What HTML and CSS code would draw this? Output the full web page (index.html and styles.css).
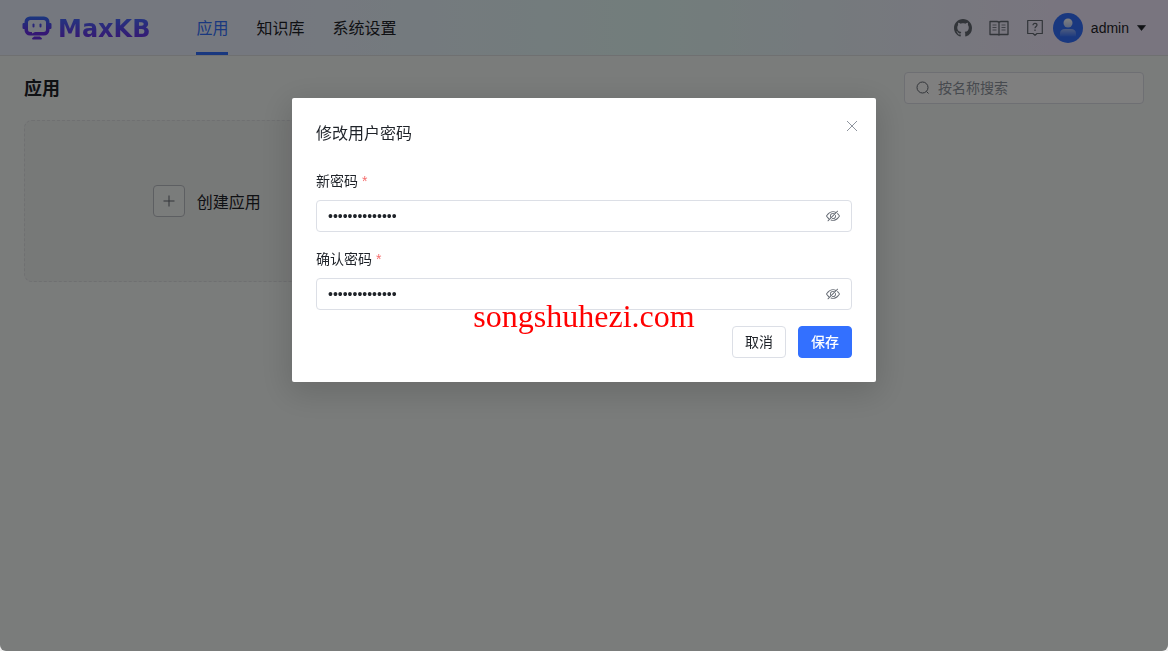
FILE: index.html
```html
<!DOCTYPE html>
<html lang="zh-CN">
<head>
<meta charset="utf-8">
<title>MaxKB</title>
<link rel="stylesheet" href="styles.css">
</head>
<body>
<div class="app">
  <header class="topbar">
    <a class="logo" href="#">
      <svg class="logo-mark" viewBox="0 0 30 24" aria-hidden="true">
        <defs>
          <linearGradient id="brand" gradientUnits="userSpaceOnUse" x1="0" y1="0" x2="0" y2="24">
            <stop offset="0" stop-color="#3370ff"/>
            <stop offset=".7" stop-color="#6a2ee8"/>
            <stop offset="1" stop-color="#6a2ee8"/>
          </linearGradient>
        </defs>
        <path fill="url(#brand)" fill-rule="evenodd" d="M8 .5h14a5.500 5.500 0 0 1 5.500 5.500V7H28.300a1.200 1.200 0 0 1 1.200 1.200v3.600a1.200 1.200 0 0 1-1.200 1.200H27.500v1a5.500 5.500 0 0 1-5.500 5.500H8A5.500 5.500 0 0 1 2.500 14V13H1.700A1.200 1.200 0 0 1 .5 11.800V8.200A1.200 1.200 0 0 1 1.700 7H2.500V6A5.500 5.500 0 0 1 8 .5ZM8.500 4A2.500 2.500 0 0 0 6 6.500v7A2.500 2.500 0 0 0 8.500 16H10v1.500L13 16h8.500A2.500 2.500 0 0 0 24 13.500v-7A2.500 2.500 0 0 0 21.500 4ZM12 20.500h6c0 .9 2 1.200 2 2.200 0 .5-.4.800-1 .8h-8c-.6 0-1-.3-1-.8 0-1 2-1.300 2-2.200Z"/>
        <rect x="10.500" y="7.500" width="2" height="4" rx="1" fill="url(#brand)"/>
        <rect x="17.500" y="7.500" width="2" height="4" rx="1" fill="url(#brand)"/>
      </svg>
      <span class="logo-text">MaxKB</span>
    </a>
    <nav class="nav">
      <a class="nav-item active" href="#">应用</a>
      <a class="nav-item" href="#">知识库</a>
      <a class="nav-item" href="#">系统设置</a>
    </nav>
    <div class="tools">
      <a class="tool" href="#" aria-label="GitHub">
        <svg class="icon-18" viewBox="0 0 16 16" fill="currentColor"><path d="M8 0C3.580 0 0 3.580 0 8c0 3.540 2.290 6.530 5.470 7.590.4.070.55-.17.55-.38 0-.19-.01-.82-.01-1.490-2.010.37-2.530-.49-2.690-.94-.09-.23-.48-.94-.82-1.130-.28-.15-.68-.52-.01-.53.63-.01 1.080.58 1.230.82.72 1.210 1.870.87 2.330.66.070-.52.280-.87.510-1.070-1.780-.2-3.640-.89-3.640-3.950 0-.87.310-1.590.820-2.150-.08-.2-.36-1.020.080-2.120 0 0 .67-.21 2.200.82.640-.18 1.320-.27 2-.27s1.360.090 2 .27c1.530-1.040 2.200-.82 2.200-.82.440 1.100.160 1.920.080 2.120.510.560.820 1.270.820 2.150 0 3.070-1.870 3.750-3.650 3.950.290.250.540.730.540 1.480 0 1.070-.01 1.930-.01 2.200 0 .210.150.460.550.380A8.010 8.010 0 0 0 16 8c0-4.420-3.580-8-8-8Z"/></svg>
      </a>
      <a class="tool" href="#" aria-label="文档">
        <svg class="icon-20" viewBox="0 0 20 20" fill="none" stroke="currentColor" stroke-width="1.300" stroke-linejoin="round"><path d="M10 4.500C9.500 3.800 9 3.500 8 3.500H1v13h7.500c.7 0 1.200.2 1.500.6.3-.4.800-.6 1.500-.6H19v-13h-7c-1 0-1.500.3-2 1Zm0 0V17"/><path d="M3.500 7h4M3.500 9.500h4M3.500 12h4M12.500 7h4M12.500 9.500h4M12.500 12h4" stroke-width=".8"/></svg>
      </a>
      <a class="tool" href="#" aria-label="帮助">
        <svg class="icon-18" viewBox="0 0 18 18" fill="none" stroke="currentColor" stroke-width="1.200"><path d="M1.700 1.500h14.600v13H11l-2 1.800-2-1.800H1.700Z" stroke-linejoin="round"/><path d="M7 6.300c0-1.200.8-2 2-2s2 .7 2 1.800c0 1.400-2 1.500-2 3.200M9 10.500v1.400"/></svg>
      </a>
    </div>
    <button class="user" type="button">
      <svg class="avatar" viewBox="0 0 30 30" aria-hidden="true">
        <defs>
          <linearGradient id="head" x1="0" y1="0" x2="0" y2="1">
            <stop offset="0" stop-color="#fff"/>
            <stop offset="1" stop-color="#fff" stop-opacity=".65"/>
          </linearGradient>
          <linearGradient id="person" x1="0" y1="0" x2="0" y2="1">
            <stop offset="0" stop-color="#fff" stop-opacity=".5"/>
            <stop offset="1" stop-color="#fff" stop-opacity=".05"/>
          </linearGradient>
        </defs>
        <circle cx="15" cy="15" r="15" fill="#3370ff"/>
        <path fill="url(#person)" d="M7 23.500v-3c0-3 2-4.500 5-4.500h6c3 0 5 1.500 5 4.500v3Z"/>
        <circle cx="15" cy="10" r="4.500" fill="url(#head)"/>
      </svg>
      <span>admin</span>
      <svg class="caret" viewBox="0 0 8 6" aria-hidden="true"><path d="M0 .5h8L4 5.500Z" fill="currentColor" stroke="currentColor" stroke-width=".6"/></svg>
    </button>
  </header>
  <main class="page">
    <div class="page-head">
      <h1 class="page-title">应用</h1>
      <label class="search">
        <svg class="icon-14" viewBox="0 0 14 14" fill="none" stroke="currentColor"><circle cx="6.500" cy="6.500" r="5.500"/><path d="m10.500 10.500 2 2"/></svg>
        <input class="search-input" type="text" placeholder="按名称搜索" aria-label="按名称搜索">
      </label>
    </div>
    <div class="cards">
      <button class="create-card" type="button">
        <span class="plus">
          <svg class="icon-14" viewBox="0 0 14 14" fill="none" stroke="currentColor"><path d="M7 1.500v11M1.500 7h11"/></svg>
        </span>
        <span class="create-text">创建应用</span>
      </button>
    </div>
  </main>
</div>

<div class="overlay">
  <form class="dialog" role="dialog" aria-labelledby="dialog-title">
    <h2 class="dialog-title" id="dialog-title">修改用户密码</h2>
    <button class="close" type="button" aria-label="关闭">
      <svg class="icon-12" viewBox="0 0 12 12" fill="none" stroke="currentColor"><path d="m1 1 10 10M11 1 1 11"/></svg>
    </button>
    <div class="field">
      <label class="field-label" for="pwd">新密码 <span class="required">*</span></label>
      <div class="input-box">
        <input class="password" id="pwd" type="password" value="password123456">
        <button class="eye" type="button" aria-label="显示密码">
          <svg class="icon-14" viewBox="0 0 1024 1024" fill="currentColor"><path id="eye-off" d="M876.8 156.8c0-9.6-3.2-16-9.6-22.4-6.4-6.4-12.8-9.6-22.4-9.6-9.6 0-16 3.2-22.4 9.6L736 220.8c-64-32-137.6-51.2-224-60.8-160 16-288 73.6-377.6 176C44.8 438.4 0 496 0 512s48 73.6 134.4 176c22.4 25.6 44.8 48 73.6 67.2l-86.4 89.6c-6.4 6.4-9.6 12.8-9.6 22.4 0 9.6 3.2 16 9.6 22.4 6.4 6.4 12.8 9.6 22.4 9.6 9.6 0 16-3.2 22.4-9.6l704-710.4c3.2-6.4 6.4-12.8 6.4-22.4Zm-646.4 528c-76.8-70.4-128-128-153.6-172.8 28.8-48 80-105.6 153.6-172.8C304 272 400 230.4 512 224c64 3.2 124.8 19.2 176 44.8l-54.4 54.4C598.4 300.8 560 288 512 288c-64 0-115.2 22.4-160 64s-64 96-64 160c0 48 12.8 89.6 35.2 124.8L256 707.2c-9.6-6.4-19.2-16-25.6-22.4Zm140.8-96c-12.8-22.4-19.2-48-19.2-76.8 0-44.8 16-83.2 48-112 32-28.8 67.2-48 112-48 28.8 0 54.4 6.4 73.6 19.2L371.2 588.8ZM889.6 336c-12.8-16-28.8-28.8-41.6-41.6l-48 48c73.6 67.2 124.8 124.8 150.4 169.6-28.8 48-80 105.6-153.6 172.8-73.6 67.2-172.8 108.8-284.8 115.2-51.2-3.2-99.2-12.8-140.8-28.8l-48 48c57.6 22.4 118.4 38.4 188.8 44.8 160-16 288-73.6 377.6-176C979.2 585.6 1024 528 1024 512s-48-73.6-134.4-176ZM512 672c-12.8 0-25.6-3.2-38.4-6.4l-51.2 51.2c28.8 12.8 57.6 19.2 89.6 19.2 64 0 115.2-22.4 160-64 41.6-41.6 64-96 64-160 0-32-6.4-64-19.2-89.6l-51.2 51.2c3.2 12.8 6.4 25.6 6.4 38.4 0 44.8-16 83.2-48 112-32 28.8-67.2 48-112 48Z"/></svg>
        </button>
      </div>
    </div>
    <div class="field">
      <label class="field-label" for="pwd2">确认密码 <span class="required">*</span></label>
      <div class="input-box">
        <input class="password" id="pwd2" type="password" value="password123456">
        <button class="eye" type="button" aria-label="显示密码">
          <svg class="icon-14" viewBox="0 0 1024 1024" fill="currentColor"><use href="#eye-off"/></svg>
        </button>
      </div>
    </div>
    <div class="actions">
      <button class="btn" type="button">取消</button>
      <button class="btn btn-primary" type="submit">保存</button>
    </div>
    <span class="watermark">songshuhezi.com</span>
  </form>
</div>
</body>
</html>
```
FILE: styles.css
```css
* { box-sizing: border-box; }

html { background: #f0f0f0; }

body {
  margin: 0;
  color: #1f2329;
  font: 14px/22px "Liberation Sans", "Noto Sans CJK SC", sans-serif;
}

button {
  margin: 0;
  padding: 0;
  border: 0;
  background: none;
  color: inherit;
  font: inherit;
}

input { font: inherit; color: inherit; }
a { color: inherit; text-decoration: none; }
svg { display: block; flex: none; }

.icon-12 { width: 12px; height: 12px; }
.icon-14 { width: 14px; height: 14px; }
.icon-18 { width: 18px; height: 18px; }
.icon-20 { width: 20px; height: 20px; }

.app {
  min-height: 100vh;
  border-radius: 0 0 6px 6px;
  background: #f5f8f7;
}

.topbar {
  display: flex;
  align-items: center;
  height: 56px;
  padding: 0 22px;
  border-bottom: 1px solid #dee0e3;
  background: linear-gradient(90deg, #ebf1ff 24%, #e5fbf8 56%, #f2ebfe 90%);
}

.logo { display: flex; align-items: center; gap: 6px; }
.logo-mark { width: 30px; height: 24px; }

.logo-text {
  padding-top: 2px;
  background: linear-gradient(#4a68ff 20%, #6a35ea 80%);
  background-clip: text;
  color: transparent;
  font: bold 24px/28px "DejaVu Sans", sans-serif;
}

.nav {
  display: flex;
  align-self: stretch;
  gap: 28px;
  margin-left: 46px;
  font-size: 16px;
}

.nav-item {
  display: flex;
  align-items: center;
  padding-top: 5px;
  border-bottom: 3px solid transparent;
}

.nav-item.active { border-color: #3370ff; color: #3370ff; }

.tools {
  display: flex;
  align-items: center;
  gap: 16px;
  margin-left: auto;
  color: #646a73;
}

.tool {
  display: flex;
  align-items: center;
  justify-content: center;
  width: 20px;
  height: 20px;
}

.user {
  display: flex;
  align-items: center;
  gap: 8px;
  margin-left: 8px;
}

.avatar { width: 30px; height: 30px; }
.caret { width: 9px; height: 6px; }

.page { padding: 16px 24px; }

.page-head {
  display: flex;
  align-items: center;
  justify-content: space-between;
}

.page-title {
  margin: 0;
  padding-top: 2px;
  font-size: 18px;
  line-height: 28px;
}

.search {
  display: flex;
  align-items: center;
  gap: 8px;
  width: 240px;
  height: 32px;
  padding: 0 11px;
  border: 1px solid #dcdfe6;
  border-radius: 4px;
  background: #fff;
  color: #646a73;
}

.search-input {
  flex: 1;
  min-width: 0;
  padding: 0;
  border: 0;
  outline: 0;
  background: none;
}

.search-input::placeholder { color: #8f959e; }

.cards {
  display: grid;
  grid-template-columns: repeat(3, 1fr);
  gap: 12px;
  margin-top: 16px;
}

.create-card {
  display: flex;
  align-items: center;
  justify-content: center;
  gap: 12px;
  min-height: 162px;
  border: 1px dashed #dee0e3;
  border-radius: 8px;
  background: #eff2f1;
  font-size: 16px;
}

.create-text { padding-top: 3px; }

.plus {
  display: flex;
  align-items: center;
  justify-content: center;
  width: 32px;
  height: 32px;
  border: 1px solid #bbbfc4;
  border-radius: 4px;
  background: #f5f8f7;
  color: #646a73;
}

.overlay {
  position: fixed;
  inset: 0;
  padding: 98px 24px 24px;
  border-radius: 0 0 6px 6px;
  background: rgba(0, 0, 0, .5);
}

.dialog {
  position: relative;
  display: flex;
  flex-direction: column;
  gap: 16px;
  max-width: 584px;
  margin: 0 auto;
  padding: 24px;
  border-radius: 2px;
  background: #fff;
  box-shadow: 0 8px 32px 4px rgba(0, 0, 0, .14);
}

.dialog-title {
  margin: 0 0 8px;
  font-size: 16px;
  font-weight: 400;
  line-height: 24px;
}

.close {
  position: absolute;
  top: 16px;
  right: 12px;
  display: grid;
  place-items: center;
  width: 24px;
  height: 24px;
  color: #8f959e;
}

.field { display: flex; flex-direction: column; gap: 8px; }
.required { color: #f56c6c; }

.input-box {
  display: flex;
  align-items: center;
  height: 32px;
  padding: 0 11px;
  border: 1px solid #dcdfe6;
  border-radius: 4px;
}

.password {
  flex: 1;
  min-width: 0;
  padding: 0;
  border: 0;
  outline: 0;
  background: none;
}

.eye { color: #646a73; }

.actions { display: flex; justify-content: flex-end; gap: 12px; }

.btn {
  height: 32px;
  padding: 0 12px;
  border: 1px solid #dcdfe6;
  border-radius: 4px;
}

.btn-primary {
  border-color: #3370ff;
  background: #3370ff;
  color: #fff;
  font-weight: 500;
}

.watermark {
  position: absolute;
  top: 200px;
  left: 50%;
  translate: -50%;
  color: #f00;
  font: 32px/36px "Liberation Serif", serif;
  pointer-events: none;
}
```
